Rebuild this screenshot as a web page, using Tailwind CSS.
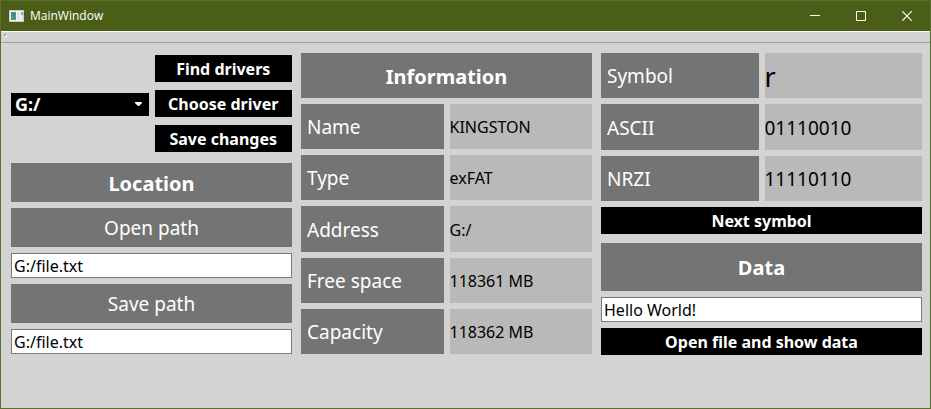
<!DOCTYPE html>
<html lang="en">
<head>
<meta charset="utf-8">
<meta name="viewport" content="width=device-width, initial-scale=1">
<title>MainWindow</title>
<script src="https://cdn.jsdelivr.net/npm/@tailwindcss/browser@4"></script>
</head>
<body class="flex min-h-screen flex-col border border-[#5a6f2a] bg-[#d3d3d3] font-['Tahoma','Noto_Sans',sans-serif] text-base text-black">
  <header class="flex h-[30px] shrink-0 items-center bg-[#4a5e17] pl-2 text-white">
    <svg class="h-3 w-4 shrink-0" viewBox="0 0 16 12" aria-hidden="true">
      <defs>
        <linearGradient id="pane" x1="0" y1="0" x2="1" y2="1"><stop offset="0" stop-color="#4a7fa5"/><stop offset="1" stop-color="#4fa070"/></linearGradient>
      </defs>
      <rect x="0.5" y="0.5" width="14" height="11" fill="#f4f4f4" stroke="#c5c8cc"/>
      <rect x="2" y="2" width="5" height="8" fill="url(#pane)"/>
      <rect x="8" y="2" width="3" height="8" fill="#e2e2e6"/>
      <rect x="12" y="2" width="2" height="3" fill="#7fa6a0"/>
      <rect x="12" y="5" width="2" height="5" fill="#e8e8ea"/>
    </svg>
    <h1 class="ml-[5px] flex-1 font-['Segoe_UI','Open_Sans',sans-serif] text-xs">MainWindow</h1>
    <button type="button" aria-label="Minimize" class="flex h-full w-[46px] items-center justify-center">
      <svg class="size-[10px]" viewBox="0 0 10 10" fill="none" stroke="#fff"><path d="M0 4.5H10"/></svg>
    </button>
    <button type="button" aria-label="Maximize" class="flex h-full w-[46px] items-center justify-center">
      <svg class="size-[10px]" viewBox="0 0 10 10" fill="none" stroke="#fff"><path d="M.5.5h9v9h-9z"/></svg>
    </button>
    <button type="button" aria-label="Close" class="flex h-full w-[46px] items-center justify-center">
      <svg class="size-[10px]" viewBox="0 0 10 10" fill="none" stroke="#fff" stroke-width="1.2"><path d="M.3.3l9.4 9.4M9.7.3L.3 9.7"/></svg>
    </button>
  </header>

  <div class="flex h-3 shrink-0 border-t border-b border-t-white border-b-[#a0a0a0] pt-[2px] pl-[3px]" role="toolbar" aria-label="Tools">
    <svg class="h-[5px] w-[4px]" viewBox="0 0 4 5" aria-hidden="true"><path d="M1 1h2v2H1z" fill="#fff"/><path d="M0 0h2v2H0z" fill="#a8a8a8"/><path d="M0 4h1v1H0z" fill="#fff"/></svg>
  </div>

  <main class="grid grid-cols-[281fr_291fr_321fr] items-start gap-[9px] pt-[10px] pr-2 pb-8 pl-[10px]">
    <section class="flex flex-col gap-[6px]">
      <div class="mb-[5px] grid grid-cols-2 items-center gap-[6px] pt-[2px]">
        <div class="relative pt-px">
          <select aria-label="Driver" class="block h-[23px] w-full appearance-none rounded-none bg-black pl-1 text-lg leading-[23px] font-bold text-white"><option>G:/</option></select>
          <svg class="pointer-events-none absolute top-[10px] right-[7px] h-1 w-[7px]" viewBox="0 0 7 4" aria-hidden="true"><path d="M0 0h7v1L4 4H3L0 1z" fill="#fff"/></svg>
        </div>
        <div class="flex flex-col gap-2">
          <button type="button" class="h-[27px] bg-black pt-[2px] leading-[25px] font-bold text-white">Find drivers</button>
          <button type="button" class="h-[27px] bg-black pt-[2px] leading-[25px] font-bold text-white">Choose driver</button>
          <button type="button" class="h-[27px] bg-black pt-[2px] leading-[25px] font-bold text-white">Save changes</button>
        </div>
      </div>
      <h2 class="bg-[#747474] pt-[2px] text-center text-xl leading-[37px] font-bold text-white">Location</h2>
      <label for="open" class="bg-[#747474] pt-[2px] text-center text-[19px] leading-[37px] text-white">Open path</label>
      <input id="open" type="text" value="G:/file.txt" class="h-[25px] w-full border border-[#7a7a7a] bg-white px-[2px]">
      <label for="save" class="bg-[#747474] pt-[2px] text-center text-[19px] leading-[37px] text-white">Save path</label>
      <input id="save" type="text" value="G:/file.txt" class="h-[25px] w-full border border-[#7a7a7a] bg-white px-[2px]">
    </section>

    <section class="flex flex-col gap-[6px]">
      <h2 class="bg-[#747474] pt-[2px] text-center text-xl leading-[43px] font-bold text-white">Information</h2>
      <dl class="grid grid-cols-2 gap-[6px] leading-[43px]">
        <dt class="bg-[#747474] pt-[2px] pl-[6px] text-[19px] leading-[43px] text-white">Name</dt>
        <dd class="bg-[#b9b9b9] pt-[2px]">KINGSTON</dd>
        <dt class="bg-[#747474] pt-[2px] pl-[6px] text-[19px] leading-[43px] text-white">Type</dt>
        <dd class="bg-[#b9b9b9] pt-[2px]">exFAT</dd>
        <dt class="bg-[#747474] pt-[2px] pl-[6px] text-[19px] leading-[44px] text-white">Address</dt>
        <dd class="bg-[#b9b9b9] pt-[2px] leading-[44px]">G:/</dd>
        <dt class="bg-[#747474] pt-[2px] pl-[6px] text-[19px] leading-[43px] text-white">Free space</dt>
        <dd class="bg-[#b9b9b9] pt-[2px]">118361 MB</dd>
        <dt class="bg-[#747474] pt-[2px] pl-[6px] text-[19px] leading-[43px] text-white">Capacity</dt>
        <dd class="bg-[#b9b9b9] pt-[2px]">118362 MB</dd>
      </dl>
    </section>

    <section class="flex flex-col gap-[6px]">
      <dl class="grid grid-cols-2 gap-[6px] text-[19px]">
        <dt class="bg-[#747474] pt-[2px] pl-[6px] leading-[43px] text-white">Symbol</dt>
        <dd class="bg-[#b9b9b9] pt-[2px] text-[27px] leading-[43px]">r</dd>
        <dt class="bg-[#747474] pt-[2px] pl-[6px] leading-[44px] text-white">ASCII</dt>
        <dd class="bg-[#b9b9b9] pt-[2px] leading-[44px]">01110010</dd>
        <dt class="bg-[#747474] pt-[2px] pl-[6px] leading-[43px] text-white">NRZI</dt>
        <dd class="bg-[#b9b9b9] pt-[2px] leading-[43px]">11110110</dd>
      </dl>
      <button type="button" class="mb-[3px] h-[27px] bg-black pt-[2px] leading-[25px] font-bold text-white">Next symbol</button>
      <h2 class="bg-[#747474] pt-[2px] text-center text-xl leading-[46px] font-bold text-white"><label for="data">Data</label></h2>
      <input id="data" type="text" value="Hello World!" class="h-[25px] w-full border border-[#7a7a7a] bg-white px-[2px]">
      <button type="button" class="h-[27px] bg-black pt-[2px] leading-[25px] font-bold text-white">Open file and show data</button>
    </section>
  </main>
</body>
</html>
